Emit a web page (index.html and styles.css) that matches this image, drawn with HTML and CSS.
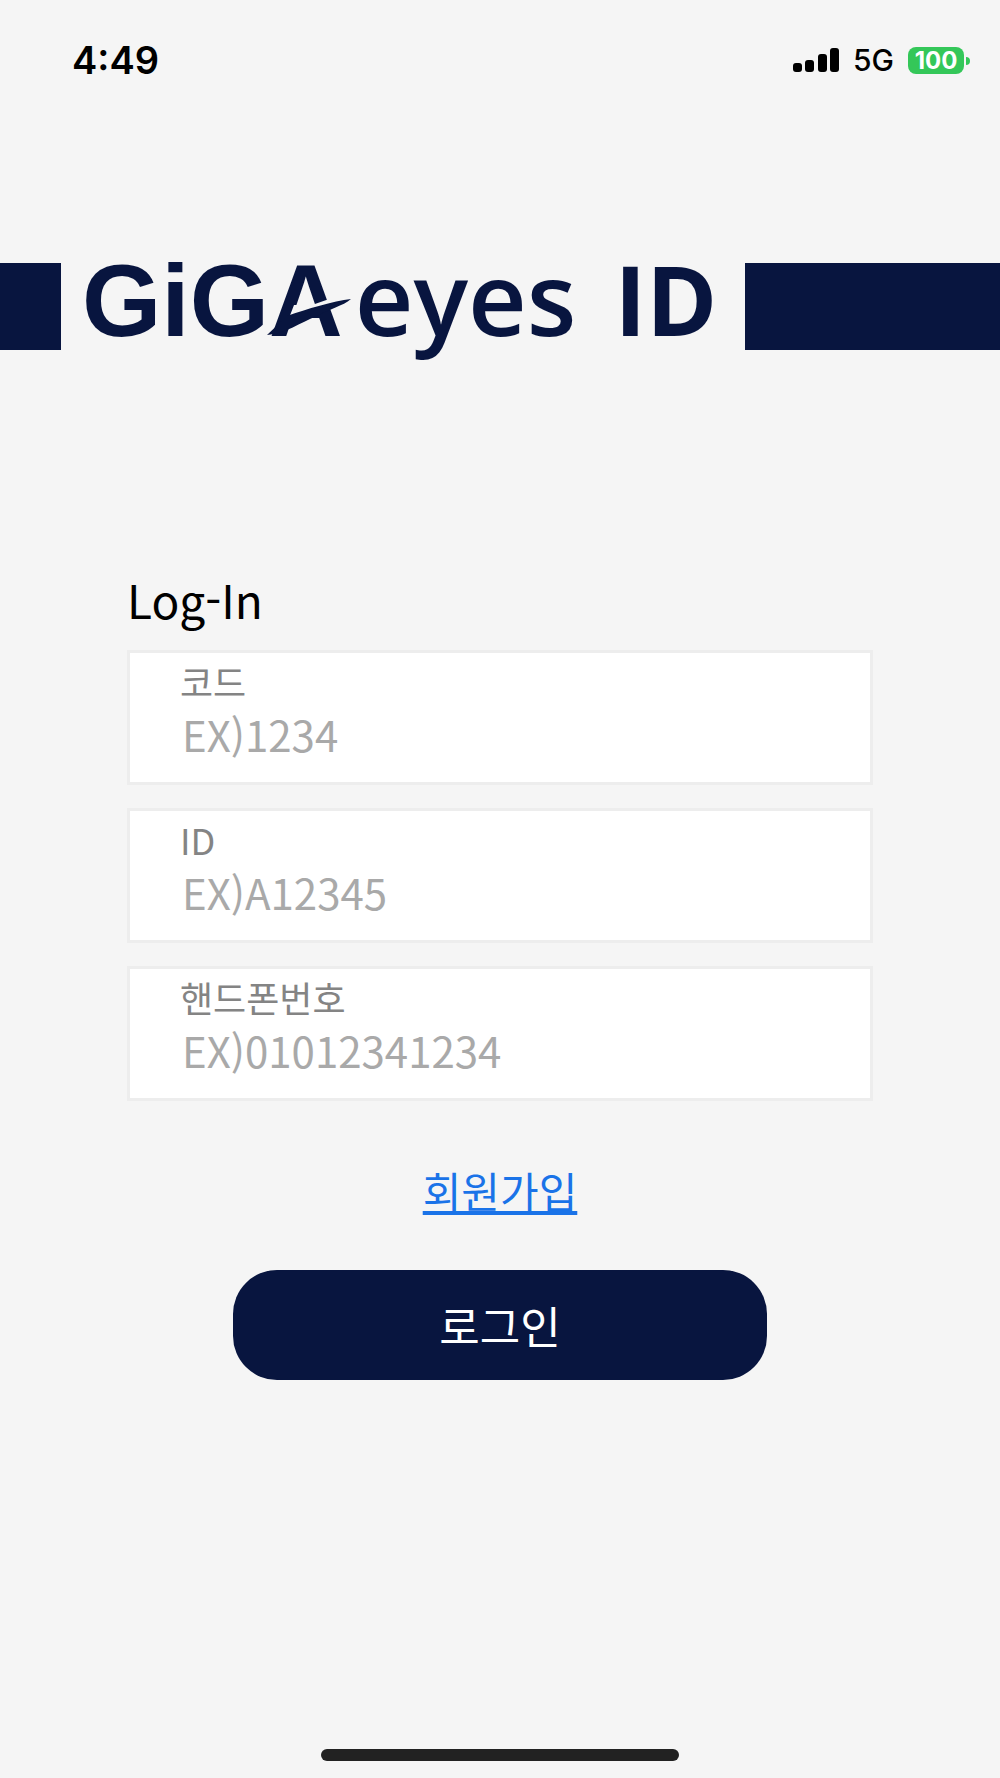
FILE: index.html
```html
<!DOCTYPE html>
<html lang="ko">
<head>
    <meta charset="UTF-8">
    <meta name="viewport" content="width=device-width, initial-scale=1.0">
    <title>GiGAeyes ID</title>
    <link rel="stylesheet" href="styles.css">
</head>
<body>

    <header class="status-bar">
      <span class="time">4:49</span>
      <div class="status-icons">
        <svg class="signal" width="46" height="24" viewBox="0 0 46 24">
          <rect x="0" y="15" width="9" height="9" rx="3" />
          <rect x="12" y="12" width="9" height="12" rx="3" />
          <rect x="25" y="6" width="9" height="18" rx="3" />
          <rect x="37" y="0" width="9" height="24" rx="3" />
        </svg>
        <span class="network">5G</span>
        <span class="battery">100</span>
      </div>
    </header>

    <main class="main">
      <div class="brand">
        <h1 class="logo">
          <span class="logo-giga">GiGA<svg class="swoosh" width="90" height="40" viewBox="0 0 90 40">
            <path class="swoosh-gap" d="M27 10 L45 10 L68 2 L68 9 L22 23 Z" />
            <path d="M0 40 L20 21 C40 14 66 6 84 4 C76 11 62 14 50 21 C32 28 20 38 0 40 Z" />
          </svg></span><span class="logo-eyes">eyes</span>
          <span class="logo-id">ID</span>
        </h1>
      </div>

      <form class="login">
        <h2 class="login-title">Log-In</h2>
        <div class="field">
          <label for="code">코드</label>
          <input type="text" id="code" placeholder="EX)1234">
        </div>
        <div class="field">
          <label for="user-id">ID</label>
          <input type="text" id="user-id" placeholder="EX)A12345">
        </div>
        <div class="field">
          <label for="phone">핸드폰번호</label>
          <input type="tel" id="phone" placeholder="EX)01012341234">
        </div>
        <a class="join" href="#">회원가입</a>
        <button class="login-btn" type="submit">로그인</button>
      </form>
    </main>

    <div class="home-bar"></div>

</body>
</html>
```

FILE: styles.css
```css
* {
  box-sizing: border-box;
}

body {
  display: flex;
  flex-direction: column;
  min-height: 100vh;
  margin: 0;
  font-family: "Noto Sans CJK KR", sans-serif;
  color: #000;
  background: #f5f5f5;
}

/* status bar */
.status-bar {
  display: flex;
  justify-content: space-between;
  align-items: center;
  height: 120px;
  padding: 0 36px 0 72px;
  font-family: Inter, sans-serif;
}
.time {
  font-size: 38px;
  font-weight: 600;
}
.status-icons {
  display: flex;
  align-items: center;
}
.network {
  margin: 0 14px;
  font-size: 30px;
  font-weight: 500;
}
.battery {
  position: relative;
  width: 56px;
  height: 27px;
  border-radius: 8px;
  font-size: 24px;
  font-weight: 700;
  line-height: 27px;
  text-align: center;
  color: #fff;
  background: #34c759;
}
.battery::after {
  content: "";
  position: absolute;
  top: 10px;
  right: -6px;
  width: 4px;
  height: 8px;
  border-radius: 0 4px 4px 0;
  background: #34c759;
}

.main {
  flex: 1;
}

/* logo on the navy band */
.brand {
  height: 87px;
  margin-top: 143px;
  padding-left: 61px;
  background: #08153f;
}
.logo {
  display: flex;
  align-items: baseline;
  width: 684px;
  height: 87px;
  margin: 0;
  padding-left: 21px;
  font-family: "Open Sans", sans-serif;
  font-size: 102px;
  line-height: 68px;
  color: #08153f;
  background: #f5f5f5;
}
.logo-giga {
  position: relative;
  font-family: "Liberation Sans", sans-serif;
  font-weight: 700;
}
.swoosh {
  position: absolute;
  left: 185px;
  bottom: 0;
  fill: #08153f;
}
.swoosh-gap {
  fill: #f5f5f5;
}
.logo-eyes {
  margin-left: 12px;
  font-weight: 600;
}
.logo-id {
  margin-left: 38px;
  font-size: 96px;
  font-weight: 700;
}

/* login form */
.login {
  display: flex;
  flex-direction: column;
  padding: 0 127px;
}
.login-title {
  margin: 217px 0 19px;
  font-size: 46px;
  font-weight: 400;
  line-height: 64px;
}
.field {
  height: 135px;
  margin-bottom: 23px;
  padding: 6px 50px;
  border: 3px solid #ededed;
  background: #fff;
}
.field label {
  display: block;
  font-size: 36px;
  line-height: 44px;
  color: #848484;
}
.field input {
  display: block;
  width: 100%;
  height: 60px;
  padding: 0 2px;
  border: 0;
  outline: none;
  font-family: inherit;
  font-size: 42px;
  background: none;
}
.field input::placeholder {
  color: #a9a9a9;
  opacity: 1;
}
.join {
  align-self: center;
  margin-top: 36px;
  font-size: 42px;
  line-height: 60px;
  color: #1a73e8;
}
.login-btn {
  height: 110px;
  margin: 50px 106px;
  border: 0;
  border-radius: 44px;
  font-family: inherit;
  font-size: 44px;
  color: #fff;
  background: #08153f;
  cursor: pointer;
}

.home-bar {
  align-self: center;
  width: 358px;
  height: 12px;
  margin-bottom: 17px;
  border-radius: 6px;
  background: #222;
}
```
